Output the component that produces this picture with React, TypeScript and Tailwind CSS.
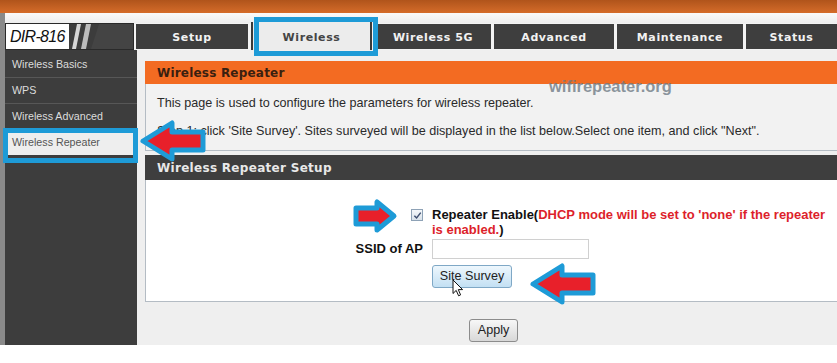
import React from "react";

const tabs = [
  { label: "Setup", w: "w-[112px]" },
  { label: "Wireless", w: "w-[121px]", active: true },
  { label: "Wireless 5G", w: "w-[116px]" },
  { label: "Advanced", w: "w-[120px]" },
  { label: "Maintenance", w: "w-[126px]" },
  { label: "Status", w: "w-[91px]" },
];

const side = ["Wireless Basics", "WPS", "Wireless Advanced", "Wireless Repeater"];

function Arrow({ dir, className }: { dir: "left" | "right"; className: string }) {
  // red arrow with a thick blue outline, as drawn over the screenshot
  const pts =
    dir === "left"
      ? "7,25 36,7 36,16 67,16 67,34 36,34 36,43"
      : "42,18 25,4 25,10 4,10 4,26 25,26 25,32";
  const box = dir === "left" ? "0 0 74 50" : "0 0 48 36";
  return (
    <svg viewBox={box} className={className}>
      <polygon points={pts} fill="#e8202a" stroke="#1e9bd7" strokeWidth="5" strokeLinejoin="round" />
    </svg>
  );
}

function Logo() {
  return (
    <div className="flex h-[27px] w-[129px] border border-[#2a2a2a] bg-[#3a3a3a]">
      <div className="flex w-[63px] items-center bg-white pl-[4px]">
        <span className="text-[16px] italic leading-none tracking-[-0.7px] text-[#111]">DIR-816</span>
      </div>
      <svg viewBox="0 0 64 25" className="h-[25px] flex-1">
        <polygon points="0,0 64,0 64,25 0,25" fill="#3c3c3c" />
        <polygon points="30,0 64,0 64,25 22,25" fill="#444" />
        <polygon points="8,0 12,0 7,25 3,25" fill="#d6d6d6" />
        <polygon points="17,0 22,0 17,25 12,25" fill="#bdbdbd" />
      </svg>
    </div>
  );
}

export default function App() {
  return (
    <div className="relative h-[363px] w-[837px] overflow-hidden bg-white font-['Liberation_Sans',Arial,sans-serif]">
      <div className="h-[13px] bg-gradient-to-b from-[#b0541b] to-[#d56c2a]" />
      <div className="flex h-[332px]">
        <div className="w-[5px] bg-[#8a8a8a]" />
        <div className="flex flex-1 flex-col bg-[#efefef]">
          <div className="h-[10px] bg-gradient-to-b from-[#fafafa] to-[#eeeeee]" />
          <div className="flex h-[27px] items-start bg-[#f3f3f3]">
            <Logo />
            <div className="ml-[2px] flex gap-[3px]">
              {tabs.map((t) =>
                t.active ? (
                  <div
                    key={t.label}
                    className={`${t.w} -mt-[1px] flex h-[28px] items-center justify-center border-x-2 border-[#3a3a3a] bg-[#ececec] pt-[5px] font-['DejaVu_Sans',sans-serif] text-[11px] font-bold tracking-[0.6px] text-[#444]`}
                  >
                    {t.label}
                  </div>
                ) : (
                  <div
                    key={t.label}
                    className={`${t.w} mt-[1px] flex h-[25px] items-center justify-center bg-[#3e3e3e] pt-[4px] font-['DejaVu_Sans',sans-serif] text-[11px] font-bold tracking-[0.6px] text-[#f2f2f2]`}
                  >
                    {t.label}
                  </div>
                )
              )}
            </div>
          </div>

          <div className="flex flex-1">
            <div className="w-[132px] bg-[#3d3d3d] pt-[2px]">
              {side.map((s, i) => (
                <div
                  key={s}
                  className={
                    i === 3
                      ? "flex h-[25px] items-center bg-[#eeeeee] pl-[7px] text-[10.7px] text-[#555]"
                      : "flex h-[26px] items-center border-b border-[#575757] pl-[7px] text-[10.7px] text-[#dcdcdc]"
                  }
                >
                  {s}
                </div>
              ))}
            </div>

            <div className="flex flex-1 flex-col pl-[8px] pt-[11px]">
              <div className="flex h-[23px] items-center bg-[#f36b22] pl-[12px] font-['DejaVu_Sans',sans-serif] text-[12px] font-bold tracking-[0.2px] text-[#3a2010]">
                Wireless Repeater
              </div>
              <div className="h-[67px] border-b border-l border-[#b4bcc4] bg-[#f2f2f2] pl-[11px] pt-[12px] text-[12.6px] leading-[14px] text-[#2a2a2a]">
                <p>This page is used to configure the parameters for wireless repeater.</p>
                <p className="mt-[14px]">
                  Step 1: click 'Site Survey'. Sites surveyed will be displayed in the list below.Select one item, and click "Next".
                </p>
              </div>

              <div className="mt-[4px] flex h-[25px] items-center bg-[#3e3e3e] pl-[12px] font-['DejaVu_Sans',sans-serif] text-[12px] font-bold tracking-[0.3px] text-[#e8e8e8]">
                Wireless Repeater Setup
              </div>
              <div className="h-[122px] border-b border-l border-[#b4bcc4] bg-white pt-[27px]">
                <div className="grid grid-cols-[278px_404px] gap-x-[8px] text-[13px] font-bold text-[#111]">
                  <div className="flex justify-end pr-[1px] pt-[2px]">
                    <span className="flex h-[12px] w-[12px] items-center justify-center border border-[#8ea2b6] bg-gradient-to-b from-[#f4f7fa] to-[#d9e2ea]">
                      <svg viewBox="0 0 10 10" className="h-[9px] w-[9px]">
                        <path d="M1.5 5.2 L4 7.8 L8.6 1.8" fill="none" stroke="#3f4f70" strokeWidth="1.6" />
                      </svg>
                    </span>
                  </div>
                  <div className="leading-[15px]">
                    Repeater Enable(
                    <span className="text-[#dd1f2b]">DHCP mode will be set to 'none' if the repeater is enabled.</span>)
                  </div>

                  <div className="mt-[2px] flex items-center justify-end pr-[1px]">SSID of AP</div>
                  <div className="mt-[2px]">
                    <div className="h-[20px] w-[157px] border border-[#d0d0d0] bg-white" />
                  </div>

                  <div />
                  <div className="mt-[6px]">
                    <button className="h-[23px] w-[80px] rounded-[3px] border border-[#7fa8c6] bg-gradient-to-b from-[#eef7fd] to-[#c3e0f3] text-[12.6px] font-normal text-[#222]">
                      Site Survey
                    </button>
                  </div>
                </div>
              </div>

              <div className="pl-[324px] pt-[15px]">
                <button className="h-[23px] w-[49px] rounded-[3px] border border-[#8c8c8c] bg-gradient-to-b from-[#f7f7f7] to-[#d8d8d8] text-[12.6px] text-[#222]">
                  Apply
                </button>
              </div>
            </div>
          </div>
        </div>
      </div>

      {/* overlays: watermark, highlight boxes, arrows, cursor */}
      <div className="absolute left-[549px] top-[74px] text-[16.5px] font-bold text-[#6e7a84]/80">wifirepeater.org</div>
      <div className="absolute left-[254px] top-[17px] h-[39px] w-[124px] border-[5px] border-[#1e9bd7]" />
      <div className="absolute left-[3px] top-[128px] h-[35px] w-[135px] border-[5px] border-[#1e9bd7]" />
      <Arrow dir="left" className="absolute left-[136px] top-[116px] h-[50px] w-[74px]" />
      <Arrow dir="right" className="absolute left-[352px] top-[198px] h-[36px] w-[48px]" />
      <Arrow dir="left" className="absolute left-[526px] top-[259px] h-[50px] w-[74px]" />
      <svg viewBox="0 0 12 18" className="absolute left-[452px] top-[279px] h-[18px] w-[12px]">
        <path d="M1 1 L1 14.5 L4.2 11.4 L6.6 16.8 L8.6 15.9 L6.3 10.6 L10.6 10.6 Z" fill="#fff" stroke="#111" strokeWidth="1" strokeLinejoin="round" />
      </svg>
    </div>
  );
}
